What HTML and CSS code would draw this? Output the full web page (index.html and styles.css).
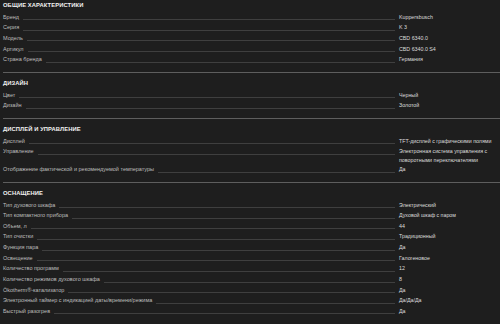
FILE: index.html
```html
<!DOCTYPE html>
<html lang="ru">
<head>
<meta charset="utf-8">
<link rel="stylesheet" href="styles.css">
</head>
<body>
<div class="specs">
  <section class="group">
    <h2 class="title">ОБЩИЕ ХАРАКТЕРИСТИКИ</h2>
    <div class="row"><span class="label">Бренд</span><span class="leader"></span><span class="value">Kuppersbusch</span></div>
    <div class="row"><span class="label">Серия</span><span class="leader"></span><span class="value">K 3</span></div>
    <div class="row"><span class="label">Модель</span><span class="leader"></span><span class="value">CBD 6340.0</span></div>
    <div class="row"><span class="label">Артикул</span><span class="leader"></span><span class="value">CBD 6340.0 S4</span></div>
    <div class="row"><span class="label">Страна бренда</span><span class="leader"></span><span class="value">Германия</span></div>
  </section>
  <section class="group">
    <h2 class="title">ДИЗАЙН</h2>
    <div class="row"><span class="label">Цвет</span><span class="leader"></span><span class="value">Черный</span></div>
    <div class="row"><span class="label">Дизайн</span><span class="leader"></span><span class="value">Золотой</span></div>
  </section>
  <section class="group">
    <h2 class="title">ДИСПЛЕЙ И УПРАВЛЕНИЕ</h2>
    <div class="row"><span class="label">Дисплей</span><span class="leader"></span><span class="value nowrap">TFT-дисплей с графическими полями</span></div>
    <div class="row"><span class="label">Управление</span><span class="leader"></span><span class="value">Электронная система управления с поворотными переключателями</span></div>
    <div class="row"><span class="label">Отображение фактической и рекомендуемой температуры</span><span class="leader"></span><span class="value">Да</span></div>
  </section>
  <section class="group">
    <h2 class="title">ОСНАЩЕНИЕ</h2>
    <div class="row"><span class="label">Тип духового шкафа</span><span class="leader"></span><span class="value">Электрический</span></div>
    <div class="row"><span class="label">Тип компактного прибора</span><span class="leader"></span><span class="value">Духовой шкаф с паром</span></div>
    <div class="row"><span class="label">Объем, л</span><span class="leader"></span><span class="value">44</span></div>
    <div class="row"><span class="label">Тип очистки</span><span class="leader"></span><span class="value">Традиционный</span></div>
    <div class="row"><span class="label">Функция пара</span><span class="leader"></span><span class="value">Да</span></div>
    <div class="row"><span class="label">Освещение</span><span class="leader"></span><span class="value">Галогеновое</span></div>
    <div class="row"><span class="label">Количество программ</span><span class="leader"></span><span class="value">12</span></div>
    <div class="row"><span class="label">Количество режимов духового шкафа</span><span class="leader"></span><span class="value">8</span></div>
    <div class="row"><span class="label">Ökotherm®-катализатор</span><span class="leader"></span><span class="value">Да</span></div>
    <div class="row"><span class="label">Электронный таймер с индикацией даты/времени/режима</span><span class="leader"></span><span class="value">Да/Да/Да</span></div>
    <div class="row"><span class="label">Быстрый разогрев</span><span class="leader"></span><span class="value">Да</span></div>
  </section>
</div>
</body>
</html>
```

FILE: styles.css
```css
html, body {
  margin: 0;
  padding: 0;
  background: #1e1e1e;
  overflow: hidden;
}
body {
  font-family: "Liberation Sans", Arial, sans-serif;
  font-size: 5.3px;
  color: #c4c4c4;
}
.specs {
  padding-left: 3px;
}
.group {
  border-bottom: 1px solid #5e5e5e;
  padding: 5px 0 6px;
}
.group:first-child {
  padding-top: 0;
}
.title {
  margin: 0 0 2.7px;
  height: 10px;
  line-height: 10px;
  font-size: 5.8px;
  font-weight: 700;
  color: #f2f2f2;
  letter-spacing: 0.1px;
}
.row {
  display: flex;
  align-items: flex-start;
  min-height: 10.65px;
  line-height: 9px;
}
.label {
  flex: none;
  white-space: nowrap;
  font-size: 5.5px;
  color: #bdbdbd;
}
.leader {
  flex: 1;
  height: 6.5px;
  margin: 0 4px;
  border-bottom: 1px solid #3f3f3f;
}
.value {
  flex: none;
  width: 95px;
  margin-right: 6px;
  color: #dcdcdc;
}
.nowrap {
  white-space: nowrap;
}
```
